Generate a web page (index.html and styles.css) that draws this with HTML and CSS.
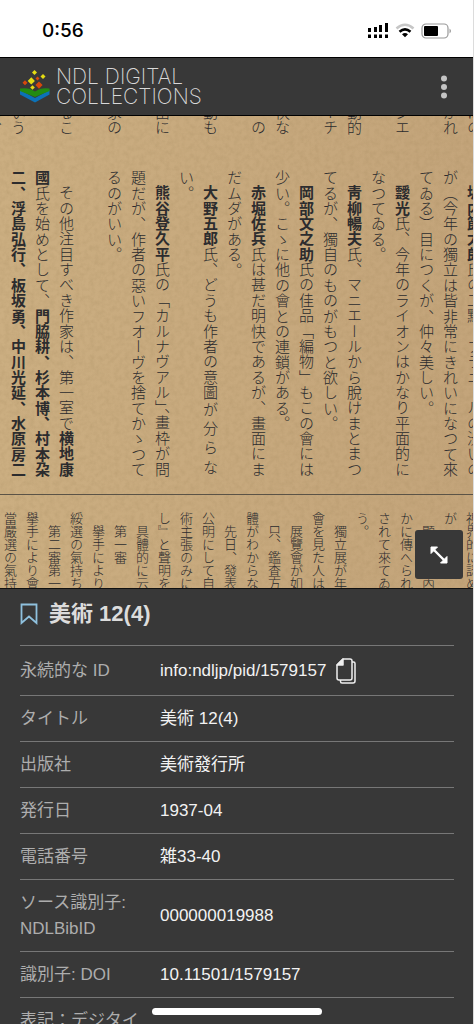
FILE: index.html
```html
<!DOCTYPE html>
<html lang="ja">
<head>
<meta charset="utf-8">
<meta name="viewport" content="width=device-width, initial-scale=1">
<title>美術 12(4) - NDL Digital Collections</title>
<link rel="stylesheet" href="styles.css">
</head>
<body>
<div class="app">
  <div class="status">
    <span class="clock">0:56</span>
    <div class="status-icons">
      <svg width="21" height="16" viewBox="0 0 21 16" aria-hidden="true"><path d="M0 5h3v4H0zM6 4h3v5H6zM11 2h3v7h-3zM17 0h3v9h-3zM0 11.500h3V15H0zM6 11.500h3V15H6zM11 11.500h3V15h-3zM17 11.500h3V15h-3z"/></svg>
      <svg width="20" height="15" viewBox="0 0 20 15" fill="none" aria-hidden="true"><path d="M1.500 5.500Q10-2 18.500 5.500" stroke="#c6c6c6" stroke-width="2.600"/><path d="M4.500 8.800Q10 4 15.500 8.800" stroke="#000" stroke-width="2.600"/><path d="M7 11.200Q10 9 13 11.200L10 14.200z" fill="#000"/></svg>
      <svg width="31" height="16" viewBox="0 0 31 16" aria-hidden="true"><rect x="1" y="1" width="26" height="14" rx="4" fill="none" stroke="#999" stroke-width="1.200"/><rect x="3" y="3" width="14" height="10" rx="1"/><path d="M28.500 5.500q3 2.500 0 5z" fill="#999"/></svg>
    </div>
  </div>

  <header class="bar">
    <a class="brand" href="#">
      <svg width="30" height="34" viewBox="0 0 30 34" aria-hidden="true">
        <path d="M0 20l15 8L29.500 20v4.500L15 32.500 0 24.500z" fill="#0c72b8"/>
        <path d="M0 18.500q9-1.500 15 3 6-4.500 14.500-3v2.500L15 27 0 21z" fill="#228b12"/>
        <g fill="#e5dc12"><path d="M14.500 0l2.500 2.500L14.500 5 12 2.500z"/><path d="M23 4l2.500 2.500L23 9l-2.500-2.500z"/><path d="M11.300 7.300l3.600 3.600-3.600 3.600-3.600-3.600z"/><path d="M12.500 15.200l2.300 2.300-2.300 2.300-2.300-2.300z"/></g>
        <g fill="#d8480c"><path d="M17.500 6.500l2 2-2 2-2-2z"/><path d="M5 10.200l2.500 2.500L5 15.200l-2.500-2.500z"/><path d="M19 11.500l3.600 3.600-3.600 3.600-3.600-3.600z"/></g>
      </svg>
      <span class="brand-name"><span>NDL DIGITAL</span><span>COLLECTIONS</span></span>
    </a>
    <button class="menu" type="button" aria-label="メニュー"><svg width="8" height="24" viewBox="0 0 8 24" fill="#c4c4c4" aria-hidden="true"><circle cx="4" cy="3.500" r="3"/><circle cx="4" cy="12" r="3"/><circle cx="4" cy="20.500" r="3"/></svg></button>
  </header>

  <main>
    <section class="viewer" aria-label="画像">
      <svg class="grain" width="100%" height="100%" aria-hidden="true"><filter id="paper"><feTurbulence type="fractalNoise" baseFrequency="0.2" numOctaves="3" seed="4"/><feColorMatrix values="0 0 0 0 .3  0 0 0 0 .2  0 0 0 0 .08  .9 0 0 0 -.32"/></filter><rect width="100%" height="100%" filter="url(#paper)"/></svg>
      <div class="tier tail">
        <p>はの</p><p>がれ</p><p></p><p>ジエ</p><p></p><p>動的</p><p>ーチ</p><p></p><p>快な</p><p>」の</p><p></p><p>動も</p><p></p><p>由に</p><p></p><p>家の</p><p></p><p>るこ</p><p></p><p>いう</p><p>し、</p>
      </div>
      <div class="tier article">
        <p class="in"><span style="--n:19"><b>坂内節太郎</b>氏の二點、ブラニールの渋いの</span></p>
        <p><span style="--n:20">が（今年の獨立は皆非常にきれいになつて來</span></p>
        <p><span style="--n:16">てゐる）目につくが、仲々美しい。</span></p>
        <p class="in"><span style="--n:19"><b>靉光</b>氏、今年のライオンはかなり平面的に</span></p>
        <p><span style="--n:6">なつてゐる。</span></p>
        <p class="in"><span style="--n:19"><b>靑柳暢夫</b>氏、マニエールから脫けまとまつ</span></p>
        <p><span style="--n:17">てるが、獨自のものがもつと欲しい。</span></p>
        <p class="in"><span style="--n:19"><b>岡部文之助</b>氏の佳品「編物」もこの會には</span></p>
        <p><span style="--n:17">少い。こゝに他の會との連鎖がある。</span></p>
        <p class="in"><span style="--n:19"><b>赤堀佐兵</b>氏は甚だ明快であるが、畫面にま</span></p>
        <p><span style="--n:7">だムダがある。</span></p>
        <p class="in"><span style="--n:14"><b>大野五郎</b>氏、どうも作者の意圖</span><span class="even" style="--n:5"><i>が</i><i>分</i><i>ら</i><i>な</i></span></p>
        <p><span style="--n:2">い。</span></p>
        <p class="in"><span style="--n:14"><b>熊谷登久平</b>氏の「カルナヴアル</span><span style="--n:1">」、</span><span style="--n:4">畫枠が問</span></p>
        <p><span style="--n:20">題だが、作者の惡いフオーヴを捨てかゝつて</span></p>
        <p><span style="--n:6">るのがいい。</span></p>
        <p></p>
        <p class="in"><span style="--n:19">その他注目すべき作家は、第一室で<b>横地康</b></span></p>
        <p><span style="--n:20"><b>國</b>氏を始めとして、<b>門脇耕、杉本博、村本朶</b></span></p>
        <p><span style="--n:20"><b>二、浮島弘行、板坂勇、中川光延、水原房二</b></span></p>
      </div>
      <div class="tier lower">
        <p>視界的に認め</p><p>が</p><p class="in">顯　　　內</p><p>かに傳へられ</p><p>されて來てゐ</p><p>う。</p><p class="in">獨立展が年</p><p>會を見た人は</p><p class="in">展覽會が如</p><p class="in">只、鑑査方</p><p>體がわからな</p><p class="in">先日、發表</p><p>公明にして自</p><p>術主張のみに</p><p>し』と聲明を</p><p class="in">具體的に云</p><p class="in">第一審</p><p class="in">擧手により</p><p>綏選の氣持ち</p><p class="in">第二審第一</p><p>擧手により會</p><p>當嚴選の氣持</p>
      </div>
      <button class="expand" type="button" aria-label="全画面表示"><svg width="18" height="18" viewBox="0 0 18 18" aria-hidden="true"><path d="M4 4l10 10" stroke="#fff" stroke-width="2.400"/><path d="M1 1h6.500L1 7.500zM17 17h-6.500L17 10.500z" fill="#fff" stroke="#fff" stroke-linejoin="round"/></svg></button>
    </section>

    <section class="details">
      <div class="heading">
        <button class="mark" type="button" aria-label="ブックマーク"><svg width="18" height="22" viewBox="0 0 18 22" aria-hidden="true"><path d="M1.500 1.500h15v18.500L9 13.500 1.500 20z" fill="none" stroke="#8fc1de" stroke-width="1.800"/></svg></button>
        <h1>美術 12(4)</h1>
      </div>
      <table class="meta">
        <tr><th scope="row">永続的な ID</th><td><div class="pid">info:ndljp/pid/1579157<button type="button" aria-label="コピー"><svg width="20" height="26" viewBox="0 0 20 26" fill="none" stroke="#eee" stroke-width="1.500" stroke-linejoin="round" aria-hidden="true"><path d="M7 1h7q2 0 2 2v17q0 2-2 2H3q-2 0-2-2V7z"/><path d="M7 1v6H1z" fill="#eee"/><path d="M16 4h1.500q1.500 0 1.500 1.500V23q0 2-2 2H6q-1.500 0-1.500-1.500V22"/></svg></button></div></td></tr>
        <tr><th scope="row">タイトル</th><td>美術 12(4)</td></tr>
        <tr><th scope="row">出版社</th><td>美術發行所</td></tr>
        <tr><th scope="row">発行日</th><td>1937-04</td></tr>
        <tr><th scope="row">電話番号</th><td>雑33-40</td></tr>
        <tr><th scope="row">ソース識別子: NDLBibID</th><td>000000019988</td></tr>
        <tr><th scope="row">識別子: DOI</th><td>10.11501/1579157</td></tr>
        <tr><th scope="row">表記：デジタイ</th><td></td></tr>
      </table>
    </section>
  </main>
  <div class="home"></div>
</div>
</body>
</html>
```
FILE: styles.css
```css
* { box-sizing: border-box; }
body {
  margin: 0;
  background: #383838;
  color: #f2f2f2;
  font: 17px/26px "Liberation Sans", "Noto Sans CJK JP", sans-serif;
}
button { padding: 0; border: 0; background: none; color: inherit; display: flex; align-items: center; justify-content: center; }
p, h1 { margin: 0; }
svg { display: block; }

.app {
  position: relative;
  height: 100vh;
  overflow: hidden;
  border-right: 1px solid #dcdcdc;
}

.status {
  display: flex;
  align-items: center;
  justify-content: space-between;
  height: 57px;
  padding: 4px 21px 0 42px;
  background: #fff;
  color: #000;
}
.clock { font: 500 19px/26px Inter, sans-serif; }
.status-icons { display: flex; align-items: center; gap: 6px; }

.bar {
  display: flex;
  align-items: center;
  justify-content: space-between;
  height: 59px;
  padding: 0 25px 0 20px;
  border-top: 1px solid #000;
  border-bottom: 1px solid #000;
}
.brand { display: flex; align-items: center; gap: 6px; color: #d8d8d8; text-decoration: none; }
.brand-name { font: 200 21px/20px Inter, sans-serif; }
.brand-name span { display: block; }

.viewer {
  position: relative;
  height: 473px;
  overflow: hidden;
  background: linear-gradient(90deg, #cbae81, #c3a47a);
  color: #2c2c2e;
  border-bottom: 1px solid #111;
  font-family: "Noto Sans CJK JP", sans-serif;
}
.grain { position: absolute; inset: 0; opacity: .35; }

/* Vertical text tiers: one paragraph per printed line, running right to left */
.tier {
  position: relative;
  display: flex;
  writing-mode: vertical-rl;
  flex-direction: column;
  width: max-content;
  font-size: 15px;
  font-weight: 300;
}
.tier p { white-space: nowrap; flex: none; }
.tier b { font-weight: 700; }
.tail, .article { line-height: 24px; }
.tail { margin-left: -18px; height: 19px; align-items: flex-end; }
.tail p { width: 24px; }
.article { margin-left: 6px; height: 307px; margin-top: 35px; }
.article p { display: flex; width: 24px; height: 307px; }
.article .in { padding-top: 15px; }
.article span {
  display: block;
  flex: none;
  height: calc(307px * var(--n) / 20);
  text-align: justify;
  text-align-last: justify;
  white-space: normal;
}
.article span[style="--n:1"] { white-space: nowrap; text-align-last: start; }
.article .even { display: flex; justify-content: space-around; }
.article i { font-style: normal; }
.lower {
  height: 83px;
  margin: 17px 0 0 -1px;
  padding-top: 17px;
  border-top: 1px solid #5b5346;
  font-size: 13px;
  line-height: 22px;
}
.lower p { width: 22px; }
.lower .in { padding-top: 13px; }

.expand {
  position: absolute;
  right: 10px;
  bottom: 9px;
  width: 48px;
  height: 49px;
  border-radius: 3px;
  background: #383838;
}

.details { padding: 11px 19px 0 20px; }
.heading { display: flex; align-items: center; gap: 11px; height: 28px; }
.heading h1 { font-size: 22px; line-height: 28px; color: #dcdcdc; }
.meta {
  width: 100%;
  margin-top: 17px;
  border-collapse: collapse;
  table-layout: fixed;
}
.meta th, .meta td { padding: 10px 0 9px; border-top: 1px solid #777; text-align: left; vertical-align: middle; }
.meta th { width: 140px; padding-right: 20px; font-weight: 400; color: #adadad; }
.pid { display: flex; align-items: center; gap: 10px; height: 30px; }

.home {
  position: absolute;
  bottom: 9px;
  left: 50%;
  width: 170px;
  height: 7px;
  margin-left: -85px;
  border-radius: 4px;
  background: #fff;
}
```
